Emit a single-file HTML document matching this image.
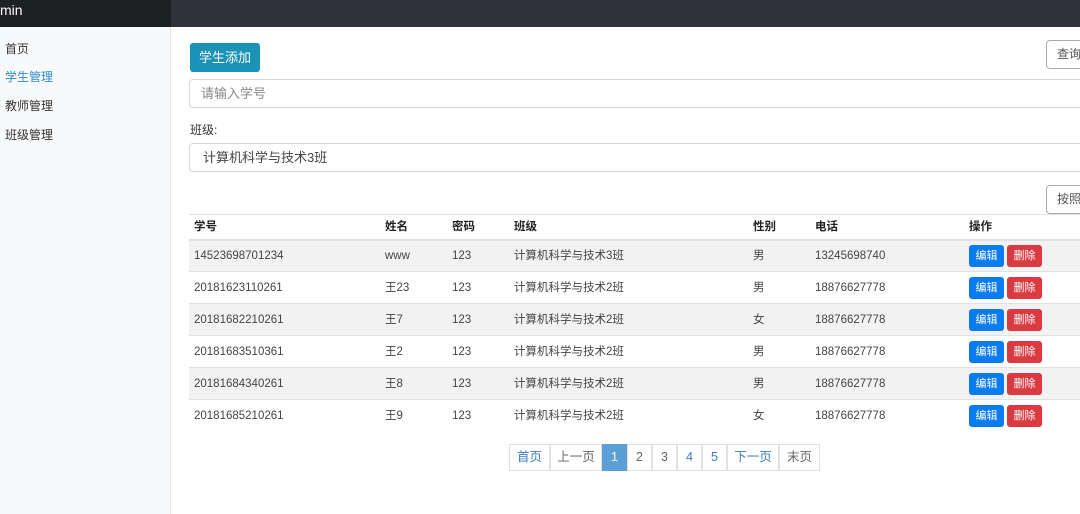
<!DOCTYPE html>
<html><head><meta charset="utf-8"><style>
*{box-sizing:border-box;margin:0;padding:0}
body{width:1080px;height:514px;overflow:hidden;background:#fff;font-family:"Liberation Sans","Noto Sans CJK SC",sans-serif;font-size:12px;color:#333;position:relative}
.top{position:absolute;left:0;top:0;width:1080px;height:27px;background:#303238}
.top .l{position:absolute;left:0;top:0;width:171px;height:27px;background:#1f2023;color:#fff;font-size:14px;line-height:20px;padding-left:0}
.side{position:absolute;left:0;top:27px;width:171px;height:487px;background:#f8f9fa;border-right:1px solid #e4e4e4}
.side div{position:absolute;left:5px;font-size:12px;color:#333}
.abs{position:absolute}
.btn{position:absolute;border-radius:3px;color:#fff;text-align:center}
.inp{position:absolute;left:189px;width:900px;border:1px solid #d6d9dc;border-radius:4px;background:#fff;font-size:13px}
table{position:absolute;left:189px;top:214px;width:900px;border-collapse:collapse;table-layout:fixed}
td,th{height:32px;padding-left:5px;text-align:left;border-top:1px solid #dee2e6;font-size:11.5px;color:#444;line-height:16px}
th{height:25px;font-weight:bold;color:#222;border-bottom:2px solid #dee2e6}
tr.s td{background:#f2f2f2}
.e,.d{display:inline-block;width:35px;height:22px;line-height:22px;text-align:center;color:#fff;border-radius:3px;font-size:11px;vertical-align:middle}
.e{background:#0b7bf0}.d{background:#dc3a43;margin-left:3px}
.pg{position:absolute;top:444px;height:27px;border:1px solid #dee2e6;text-align:center;line-height:25px;color:#3b7dbd;font-size:12.5px;margin-left:-1px}
</style></head><body>
<div class="top"><div class="l">min</div></div>
<div class="side">
<div style="top:13px">首页</div>
<div style="top:41px;color:#2a8bd0">学生管理</div>
<div style="top:70px">教师管理</div>
<div style="top:99px">班级管理</div>
</div>
<div class="btn" style="left:190px;top:43px;width:70px;height:29px;line-height:29px;background:#1a93b6;font-size:13px">学生添加</div>
<div class="abs" style="left:1046px;top:40px;width:50px;height:29px;border:1px solid #aaa;border-radius:4px;font-size:12px;line-height:27px;padding-left:10px;color:#555">查询</div>
<div class="inp" style="top:79px;height:29px;line-height:27px;padding-left:11px;color:#888">请输入学号</div>
<div class="abs" style="left:190px;top:121px;font-size:12px">班级:</div>
<div class="inp" style="top:143px;height:29px;line-height:27px;padding-left:13px;color:#444">计算机科学与技术3班</div>
<div class="abs" style="left:1046px;top:185px;width:50px;height:29px;border:1px solid #aaa;border-radius:4px;font-size:12px;line-height:27px;padding-left:10px;color:#555">按照</div>
<table>
<colgroup><col style="width:191px"><col style="width:67px"><col style="width:62px"><col style="width:239px"><col style="width:62px"><col style="width:154px"><col></colgroup>
<tr><th>学号</th><th>姓名</th><th>密码</th><th>班级</th><th>性别</th><th>电话</th><th>操作</th></tr>
<tr class="s"><td>14523698701234</td><td>www</td><td>123</td><td>计算机科学与技术3班</td><td>男</td><td>13245698740</td><td><span class="e">编辑</span><span class="d">删除</span></td></tr>
<tr><td>20181623110261</td><td>王23</td><td>123</td><td>计算机科学与技术2班</td><td>男</td><td>18876627778</td><td><span class="e">编辑</span><span class="d">删除</span></td></tr>
<tr class="s"><td>20181682210261</td><td>王7</td><td>123</td><td>计算机科学与技术2班</td><td>女</td><td>18876627778</td><td><span class="e">编辑</span><span class="d">删除</span></td></tr>
<tr><td>20181683510361</td><td>王2</td><td>123</td><td>计算机科学与技术2班</td><td>男</td><td>18876627778</td><td><span class="e">编辑</span><span class="d">删除</span></td></tr>
<tr class="s"><td>20181684340261</td><td>王8</td><td>123</td><td>计算机科学与技术2班</td><td>男</td><td>18876627778</td><td><span class="e">编辑</span><span class="d">删除</span></td></tr>
<tr><td>20181685210261</td><td>王9</td><td>123</td><td>计算机科学与技术2班</td><td>女</td><td>18876627778</td><td><span class="e">编辑</span><span class="d">删除</span></td></tr>
</table>
<div class="pg" style="left:510px;width:41px">首页</div>
<div class="pg" style="left:551px;width:52px;color:#666">上一页</div>
<div class="pg" style="left:603px;width:25px;background:#5b9fd6;border-color:#5b9fd6;color:#fff">1</div>
<div class="pg" style="left:628px;width:25px;color:#666">2</div>
<div class="pg" style="left:653px;width:25px;color:#666">3</div>
<div class="pg" style="left:678px;width:25px">4</div>
<div class="pg" style="left:703px;width:25px">5</div>
<div class="pg" style="left:728px;width:52px">下一页</div>
<div class="pg" style="left:780px;width:41px;color:#666">末页</div>
</body></html>
